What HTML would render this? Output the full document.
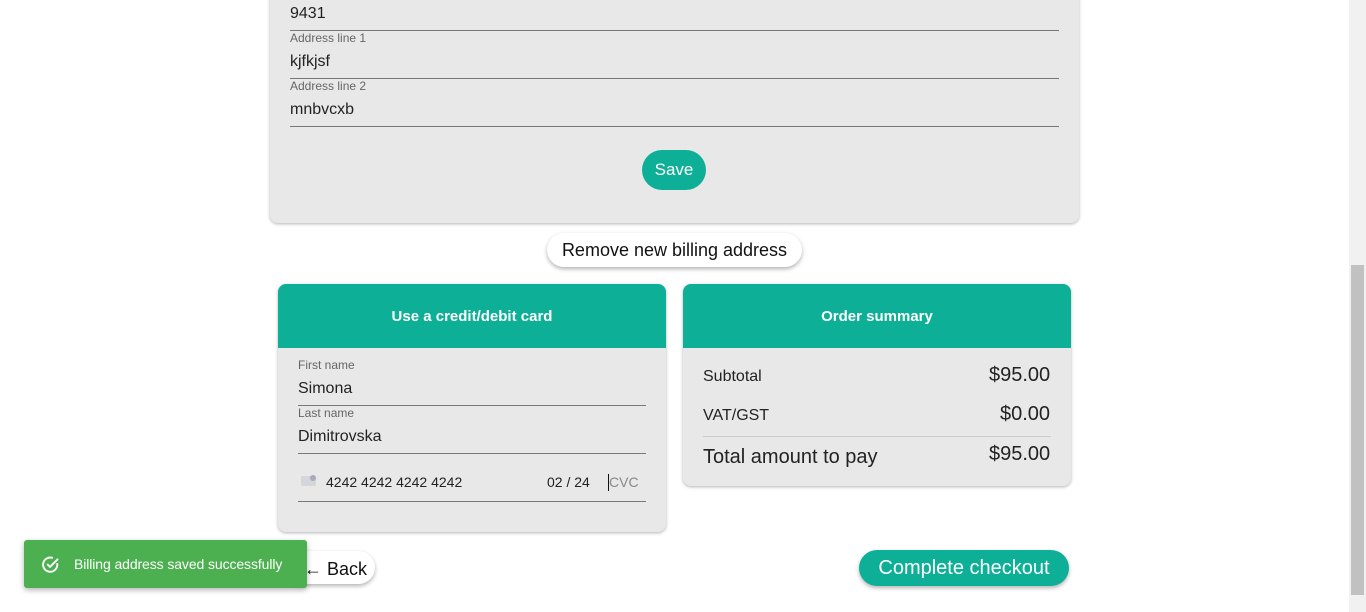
<!DOCTYPE html>
<html><head><style>
*{box-sizing:border-box;margin:0;padding:0}
body{width:1366px;height:612px;overflow:hidden;background:#fff;font-family:"Liberation Sans",Arial,sans-serif;position:relative;color:#222}
.abs{position:absolute}
.sb{left:1349px;top:0;width:17px;height:612px;background:#f1f1f1}
.thumb{left:1351px;top:265px;width:13px;height:330px;background:#c1c1c1}
.panel{left:270px;top:-10px;width:809px;height:233px;background:#e8e8e8;border-radius:0 0 8px 8px;box-shadow:0 1px 3px rgba(0,0,0,.3)}
.line{height:1px;background:#777}
.lbl{font-size:12px;color:#666}
.val{font-size:16px;color:#222}
.card{background:#e8e8e8;border-radius:8px;box-shadow:0 1px 3px rgba(0,0,0,.3);overflow:hidden}
.hdr{background:#0daf97;color:#fff;font-weight:bold;text-align:center;height:64px;line-height:66px;font-size:15px}
.pill{border-radius:20px;box-shadow:0 2px 4px rgba(0,0,0,.3);background:#fff}
</style></head><body>
<div class="abs sb"></div><div class="abs thumb"></div>
<div class="abs panel"></div>
<div class="abs val" style="left:290px;top:5px">9431</div>
<div class="abs line" style="left:290px;top:30px;width:769px"></div>
<div class="abs lbl" style="left:290px;top:31px">Address line 1</div>
<div class="abs val" style="left:290px;top:53px">kjfkjsf</div>
<div class="abs line" style="left:290px;top:78px;width:769px"></div>
<div class="abs lbl" style="left:290px;top:79px">Address line 2</div>
<div class="abs val" style="left:290px;top:101px">mnbvcxb</div>
<div class="abs line" style="left:290px;top:126px;width:769px"></div>
<div class="abs" style="left:642px;top:150px;width:64px;height:40px;border-radius:20px;background:#0daf97;color:#fff;font-size:17px;text-align:center;line-height:40px">Save</div>
<div class="abs pill" style="left:547px;top:233px;width:255px;height:34px;text-align:center;line-height:35px;font-size:18px;color:#111">Remove new billing address</div>

<div class="abs card" style="left:278px;top:284px;width:388px;height:248px"><div class="hdr">Use a credit/debit card</div></div>
<div class="abs lbl" style="left:298px;top:358px">First name</div>
<div class="abs val" style="left:298px;top:380px">Simona</div>
<div class="abs line" style="left:298px;top:405px;width:348px"></div>
<div class="abs lbl" style="left:298px;top:406px">Last name</div>
<div class="abs val" style="left:298px;top:428px">Dimitrovska</div>
<div class="abs line" style="left:298px;top:453px;width:348px"></div>
<div class="abs" style="left:301px;top:476px;width:15px;height:10px;background:#d4d6dc;border-radius:2px"></div>
<div class="abs" style="left:310px;top:475px;width:6px;height:6px;background:#aab;border-radius:50%"></div>
<div class="abs" style="left:326px;top:474px;font-size:14px">4242 4242 4242 4242</div>
<div class="abs" style="left:547px;top:474px;font-size:14px">02 / 24</div>
<div class="abs" style="left:608px;top:474px;height:17px;border-left:1px solid #111;font-size:14px;color:#888">CVC</div>
<div class="abs line" style="left:298px;top:501px;width:348px"></div>

<div class="abs card" style="left:683px;top:284px;width:388px;height:202px"><div class="hdr">Order summary</div></div>
<div class="abs" style="left:703px;top:368px;font-size:16px">Subtotal</div>
<div class="abs" style="left:989px;top:364px;font-size:20px">$95.00</div>
<div class="abs" style="left:703px;top:407px;font-size:16px">VAT/GST</div>
<div class="abs" style="left:1000px;top:403px;font-size:20px">$0.00</div>
<div class="abs" style="left:703px;top:436px;width:348px;height:1px;background:#ccc"></div>
<div class="abs" style="left:703px;top:446px;font-size:20px">Total amount to pay</div>
<div class="abs" style="left:989px;top:443px;font-size:20px">$95.00</div>

<div class="abs pill" style="left:285px;top:551px;width:90px;height:33px;font-size:18px;line-height:36px;padding-left:19px;color:#111">← Back</div>
<div class="abs" style="left:859px;top:550px;width:210px;height:36px;border-radius:18px;background:#0daf97;color:#fff;font-size:20px;text-align:center;line-height:37px;box-shadow:0 2px 4px rgba(0,0,0,.3)">Complete checkout</div>

<div class="abs" style="left:24px;top:540px;width:283px;height:48px;background:#4caf50;border-radius:3px;box-shadow:0 2px 6px rgba(0,0,0,.3);color:#fff;font-size:14px;line-height:48px;padding-left:50px;letter-spacing:-0.1px">Billing address saved successfully
<svg class="abs" style="left:17px;top:15px" width="19" height="19" viewBox="0 0 20 20" fill="none" stroke="#fff" stroke-width="2"><path d="M17 8.5A7.5 7.5 0 1 1 12.5 3.2"/><path d="M6.5 9.5l3 3L18 4"/></svg></div>
</body></html>
